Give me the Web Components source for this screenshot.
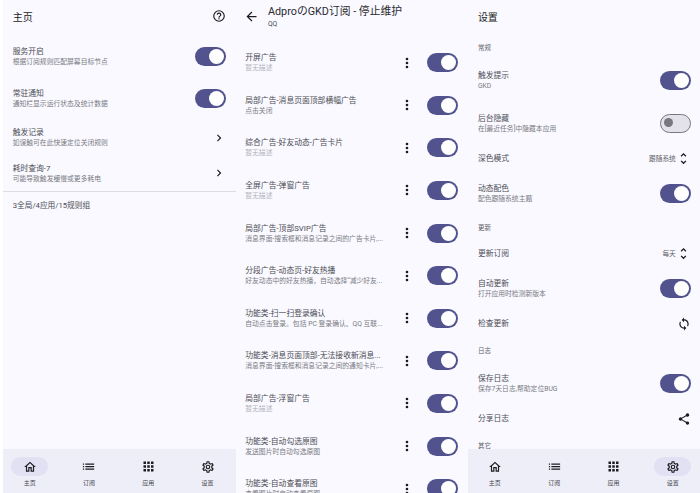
<!DOCTYPE html>
<html lang="zh">
<head>
<meta charset="utf-8">
<title>GKD</title>
<style>
  html, body { margin: 0; background: #fff; overflow: hidden; }
  body {
    display: flex;
    padding-left: 3px;
    box-sizing: border-box;
    width: 700px;
    height: 493px;
    font-family: Roboto, "Noto Sans CJK SC", sans-serif;
  }
</style>
</head>
<body>
<script>
const ICONS = {
  home: '<path d="M12 5.7l5 4.5V18h-2v-6H9v6H7v-7.8l5-4.5M12 3L2 12h3v8h6v-6h2v6h6v-8h3L12 3z"/>',
  list: '<path d="M3 13h2v-2H3v2zm0 4h2v-2H3v2zm0-8h2V7H3v2zm4 4h14v-2H7v2zm0 4h14v-2H7v2zM7 7v2h14V7H7z"/>',
  apps: '<path d="M4 8h4V4H4v4zm6 12h4v-4h-4v4zm-6 0h4v-4H4v4zm0-6h4v-4H4v4zm6 0h4v-4h-4v4zm6-10v4h4V4h-4zm-6 4h4V4h-4v4zm6 6h4v-4h-4v4zm0 6h4v-4h-4v4z"/>',
  gear: '<path fill-rule="evenodd" d="M19.43 12.98c.04-.32.07-.64.07-.98s-.03-.66-.07-.98l2.11-1.65a.5.5 0 0 0 .12-.64l-2-3.46a.5.5 0 0 0-.61-.22l-2.49 1a7.3 7.3 0 0 0-1.69-.98l-.38-2.65A.49.49 0 0 0 14 2h-4a.49.49 0 0 0-.49.42l-.38 2.65c-.61.25-1.17.59-1.69.98l-2.49-1a.57.57 0 0 0-.18-.03.5.5 0 0 0-.43.25l-2 3.46a.49.49 0 0 0 .12.64l2.11 1.65c-.04.32-.07.65-.07.98s.03.66.07.98l-2.11 1.65a.5.5 0 0 0-.12.64l2 3.46c.09.16.26.25.43.25.06 0 .12-.01.18-.03l2.49-1c.52.4 1.08.73 1.69.98l.38 2.65c.03.24.24.42.49.42h4c.25 0 .46-.18.49-.42l.38-2.65c.61-.25 1.17-.59 1.69-.98l2.49 1c.06.02.12.03.18.03a.5.5 0 0 0 .43-.25l2-3.46a.5.5 0 0 0-.12-.64l-2.11-1.65zm-1.98-1.71c.04.31.05.52.05.73s-.02.43-.05.73l-.14 1.13.89.7 1.08.84-.7 1.21-1.27-.51-1.04-.42-.9.68c-.43.32-.84.56-1.25.73l-1.06.43-.16 1.13-.2 1.35h-1.4l-.19-1.35-.16-1.13-1.06-.43c-.43-.18-.83-.41-1.23-.71l-.91-.7-1.06.43-1.27.51-.7-1.21 1.08-.84.89-.7-.14-1.13c-.03-.31-.05-.54-.05-.74s.02-.43.05-.73l.14-1.13-.89-.7-1.08-.84.7-1.21 1.27.51 1.04.42.9-.68c.43-.32.84-.56 1.25-.73l1.06-.43.16-1.13.2-1.35h1.39l.19 1.35.16 1.13 1.06.43c.43.18.83.41 1.23.71l.91.7 1.06-.43 1.27-.51.7 1.21-1.07.85-.89.7.14 1.13zM12 8a4 4 0 1 0 0 8 4 4 0 0 0 0-8zm0 6a2 2 0 1 1 0-4 2 2 0 0 1 0 4z"/>',
  chevron: '<path d="M8.59 16.59 13.17 12 8.59 7.41 10 6l6 6-6 6z"/>',
  back: '<path d="M20 11H7.83l5.59-5.59L12 4l-8 8 8 8 1.41-1.41L7.83 13H20v-2z"/>',
  more: '<path d="M12 8a2 2 0 1 0 0-4 2 2 0 0 0 0 4zm0 2a2 2 0 1 0 0 4 2 2 0 0 0 0-4zm0 6a2 2 0 1 0 0 4 2 2 0 0 0 0-4z"/>',
  help: '<path d="M11 18h2v-2h-2v2zm1-16a10 10 0 1 0 0 20 10 10 0 0 0 0-20zm0 18a8 8 0 1 1 0-16 8 8 0 0 1 0 16zm0-14a4 4 0 0 0-4 4h2a2 2 0 1 1 4 0c0 2-3 1.75-3 5h2c0-2.25 3-2.5 3-5a4 4 0 0 0-4-4z"/>',
  updown: '<path d="M12 5.83 15.17 9l1.41-1.41L12 3 7.41 7.59 8.83 9 12 5.83zm0 12.34L8.83 15l-1.41 1.41L12 21l4.59-4.59L15.17 15 12 18.17z"/>',
  sync: '<path d="M12 4V1L8 5l4 4V6c3.31 0 6 2.69 6 6 0 1.01-.25 1.97-.7 2.8l1.46 1.46A7.93 7.93 0 0 0 20 12c0-4.42-3.58-8-8-8zm0 14c-3.31 0-6-2.69-6-6 0-1.01.25-1.97.7-2.8L5.24 7.74A7.93 7.93 0 0 0 4 12c0 4.42 3.58 8 8 8v3l4-4-4-4v3z"/>',
  share: '<path d="M18 16.08c-.76 0-1.44.3-1.96.77L8.91 12.7c.05-.23.09-.46.09-.7s-.04-.47-.09-.7l7.05-4.11A2.99 2.99 0 0 0 21 5a3 3 0 1 0-6 0c0 .24.04.47.09.7L8.04 9.81A3 3 0 0 0 3 12a3 3 0 0 0 5.04 2.19l7.12 4.16c-.05.21-.08.43-.08.65a2.92 2.92 0 1 0 2.92-2.92z"/>'
};

function icon(name, size) {
  return `<svg width="${size}" height="${size}" viewBox="0 0 24 24" fill="currentColor" style="display:block">${ICONS[name]}</svg>`;
}

class GkdSwitch extends HTMLElement {
  connectedCallback() {
    if (this.shadowRoot) return;
    const off = this.hasAttribute("off");
    this.attachShadow({ mode: "open" });
    this.shadowRoot.innerHTML = `
    <style>
      :host { display: block; flex: none; width: 31px; height: 19px; }
      .track { box-sizing: border-box; width: 31px; height: 19px; border-radius: 10px; background: #52528e; position: relative; }
      .knob { position: absolute; top: 2px; right: 2px; width: 15px; height: 15px; border-radius: 50%; background: #fff; }
      .off { background: #e3e2ea; border: 1.5px solid #78767f; }
      .off .knob { top: 3.5px; right: auto; left: 3.5px; width: 9px; height: 9px; background: #78767f; }
    </style>
    <div class="track ${off ? "off" : ""}"><div class="knob"></div></div>`;
  }
}

class GkdIcon extends HTMLElement {
  connectedCallback() {
    if (this.shadowRoot) return;
    this.attachShadow({ mode: "open" });
    const size = this.getAttribute("size") || 14;
    this.shadowRoot.innerHTML = `<style>:host { display: block; flex: none; color: #1b1b21; }</style>` + icon(this.getAttribute("name"), size);
  }
}

// two line row: switch rows are taller than the plain ones, one line rows are shorter still
class GkdRow extends HTMLElement {
  connectedCallback() {
    if (this.shadowRoot) return;
    const text = this.getAttribute("sub");
    const height = this.getAttribute("height") || (text ? 42.6 : 28);
    this.attachShadow({ mode: "open" });
    this.shadowRoot.innerHTML = `
    <style>
      :host { display: flex; align-items: center; height: ${height}px; padding: 0 10px 0 9.7px; box-sizing: border-box; }
      .text { flex: 1; min-width: 0; }
      .title { font-size: 7.8px; line-height: 11px; color: #4c4c54; white-space: nowrap; }
      .sub { font-size: 6.8px; line-height: 10px; color: #7a7a82; white-space: nowrap; }
      .sub.none { color: #b4b4ba; }
    </style>
    <div class="text"><div class="title"></div><div class="sub"></div></div>
    <slot></slot>`;
    this.shadowRoot.querySelector(".title").textContent = this.getAttribute("heading");
    const sub = this.shadowRoot.querySelector(".sub");
    if (text) sub.textContent = text; else sub.remove();
    if (text === "暂无描述") sub.classList.add("none");
  }
}

class GkdPick extends HTMLElement {
  connectedCallback() {
    if (this.shadowRoot) return;
    this.attachShadow({ mode: "open" });
    this.shadowRoot.innerHTML = `
    <style>
      :host { display: flex; align-items: center; font-size: 6.7px; color: #5f5f67; }
    </style>
    <slot></slot><gkd-icon name="updown" size="15"></gkd-icon>`;
  }
}

class GkdNav extends HTMLElement {
  connectedCallback() {
    if (this.shadowRoot) return;
    const active = this.getAttribute("active");
    const items = [["home", "主页", 14], ["list", "订阅", 15], ["apps", "应用", 15], ["gear", "设置", 14]];
    this.attachShadow({ mode: "open" });
    this.shadowRoot.innerHTML = `
    <style>
      :host { display: block; height: 44px; background: #eeeef8; flex: none; overflow: hidden; }
      .grid { display: grid; grid-template-columns: repeat(4, 59.3px); margin-left: -3px; padding-top: 8px; }
      .item { display: flex; flex-direction: column; align-items: center; }
      .pill { width: 37px; height: 19px; border-radius: 10px; display: flex; align-items: center; justify-content: center; color: #1b1b21; }
      .on .pill { background: #e2e1f4; }
      .label { font-size: 6px; line-height: 9px; margin-top: 2px; color: #46464e; }
    </style>
    <div class="grid">
    ${items.map(([name, label, size]) => `<div class="item ${label === active ? "on" : ""}"><div class="pill">${icon(name, size)}</div><div class="label">${label}</div></div>`).join("")}
    </div>`;
  }
}

class GkdPhone extends HTMLElement {
  connectedCallback() {
    if (this.shadowRoot) return;
    this.attachShadow({ mode: "open" });
    this.shadowRoot.innerHTML = `
    <style>
      :host { display: flex; flex: none; flex-direction: column; width: 232.6px; height: 493px; background: #f9f9ff; overflow: hidden; }
      .body { flex: 1; min-height: 0; overflow: hidden; }
    </style>
    <div class="body"><slot></slot></div>
    <slot name="nav"></slot>`;
  }
}

class GkdTitle extends HTMLElement {
  connectedCallback() {
    if (this.shadowRoot) return;
    this.attachShadow({ mode: "open" });
    this.shadowRoot.innerHTML = `
    <style>
      :host { display: flex; align-items: center; justify-content: space-between; height: 32px; margin-bottom: 3px; padding: 0 10px 0 9.7px; font-size: 10px; color: #1b1b21; }
    </style>
    <slot></slot><slot name="action"></slot>`;
  }
}

class GkdSection extends HTMLElement {
  connectedCallback() {
    if (this.shadowRoot) return;
    this.attachShadow({ mode: "open" });
    this.shadowRoot.innerHTML = `
    <style>
      :host { display: flex; align-items: center; height: 24.3px; font-size: 6.5px; color: #5f5f67; padding: 0 9.7px; }
    </style><slot></slot>`;
  }
}

class GkdTop extends HTMLElement {
  connectedCallback() {
    if (this.shadowRoot) return;
    this.attachShadow({ mode: "open" });
    this.shadowRoot.innerHTML = `
    <style>
      :host { display: flex; align-items: flex-start; height: 41.4px; box-sizing: border-box; padding: 5px 0 0 8.6px; gap: 8.8px; }
      gkd-icon { margin-top: 4px; }
      .t { font-size: 10.8px; line-height: 13px; color: #2a2a30; white-space: nowrap; }
      .s { font-size: 6.7px; line-height: 10px; margin-top: .5px; color: #46464e; }
    </style>
    <gkd-icon name="back" size="15"></gkd-icon>
    <div><div class="t"><slot></slot></div><div class="s"><slot name="sub"></slot></div></div>`;
  }
}

[["gkd-switch", GkdSwitch], ["gkd-icon", GkdIcon], ["gkd-row", GkdRow], ["gkd-pick", GkdPick], ["gkd-nav", GkdNav],
 ["gkd-phone", GkdPhone], ["gkd-title", GkdTitle], ["gkd-section", GkdSection], ["gkd-top", GkdTop]]
  .forEach(([tag, cls]) => customElements.define(tag, cls));

const rules = [
  ["开屏广告", "暂无描述"],
  ["局部广告-消息页面顶部横幅广告", "点击关闭"],
  ["综合广告-好友动态-广告卡片", "暂无描述"],
  ["全屏广告-弹窗广告", "暂无描述"],
  ["局部广告-顶部SVIP广告", "消息界面-搜索框和消息记录之间的广告卡片,..."],
  ["分段广告-动态页-好友热播", "好友动态中的好友热播，自动选择“减少好友..."],
  ["功能类-扫一扫登录确认", "自动点击登录。包括 PC 登录确认、QQ 互联..."],
  ["功能类-消息页面顶部-无法接收新消息...", "消息界面-搜索框和消息记录之间的通知卡片,..."],
  ["局部广告-浮窗广告", "暂无描述"],
  ["功能类-自动勾选原图", "发送图片时自动勾选原图"],
  ["功能类-自动查看原图", "查看图片时自动查看原图"]
];

const SW = "<gkd-switch></gkd-switch>";
const ic = (n, s) => `<gkd-icon name="${n}" size="${s || 14}"></gkd-icon>`;

const page = (html) => {
  const p = document.createElement("gkd-phone");
  p.innerHTML = html;
  document.body.appendChild(p);
};

page(`<gkd-title>主页<span slot="action">${ic("help")}</span></gkd-title>
  <gkd-row heading="服务开启" sub="根据订阅规则匹配屏幕目标节点">${SW}</gkd-row>
  <gkd-row heading="常驻通知" sub="通知栏显示运行状态及统计数据">${SW}</gkd-row>
  <gkd-row heading="触发记录" sub="如误触可在此快速定位关闭规则" height="35.5">${ic("chevron")}</gkd-row>
  <gkd-row heading="耗时查询-7" sub="可能导致触发缓慢或更多耗电" height="35.5">${ic("chevron")}</gkd-row>
  <div style="height:1px;background:#dcdce2"></div>
  <div style="font-size:7.7px;line-height:11px;color:#4c4c54;padding:7.5px 9.7px">3全局/4应用/15规则组</div>
  <gkd-nav slot="nav" active="主页"></gkd-nav>`);

page(`<gkd-top>AdproのGKD订阅 - 停止维护<span slot="sub">QQ</span></gkd-top>
  ${rules.map(([t, s]) => `<gkd-row heading="${t}" sub="${s}"><div style="display:flex;align-items:center;gap:12.3px">${ic("more", 16)}${SW}</div></gkd-row>`).join("")}`);

page(`<gkd-title>设置</gkd-title>
  <gkd-section>常规</gkd-section>
  <gkd-row heading="触发提示" sub="GKD">${SW}</gkd-row>
  <gkd-row heading="后台隐藏" sub="在[最近任务]中隐藏本应用"><gkd-switch off></gkd-switch></gkd-row>
  <gkd-row heading="深色模式"><gkd-pick>跟随系统</gkd-pick></gkd-row>
  <gkd-row heading="动态配色" sub="配色跟随系统主题">${SW}</gkd-row>
  <gkd-section>更新</gkd-section>
  <gkd-row heading="更新订阅"><gkd-pick>每天</gkd-pick></gkd-row>
  <gkd-row heading="自动更新" sub="打开应用时检测新版本">${SW}</gkd-row>
  <gkd-row heading="检查更新">${ic("sync")}</gkd-row>
  <gkd-section>日志</gkd-section>
  <gkd-row heading="保存日志" sub="保存7天日志,帮助定位BUG">${SW}</gkd-row>
  <gkd-row heading="分享日志">${ic("share")}</gkd-row>
  <gkd-section>其它</gkd-section>
  <gkd-nav slot="nav" active="设置"></gkd-nav>`);
</script>
</body>
</html>
